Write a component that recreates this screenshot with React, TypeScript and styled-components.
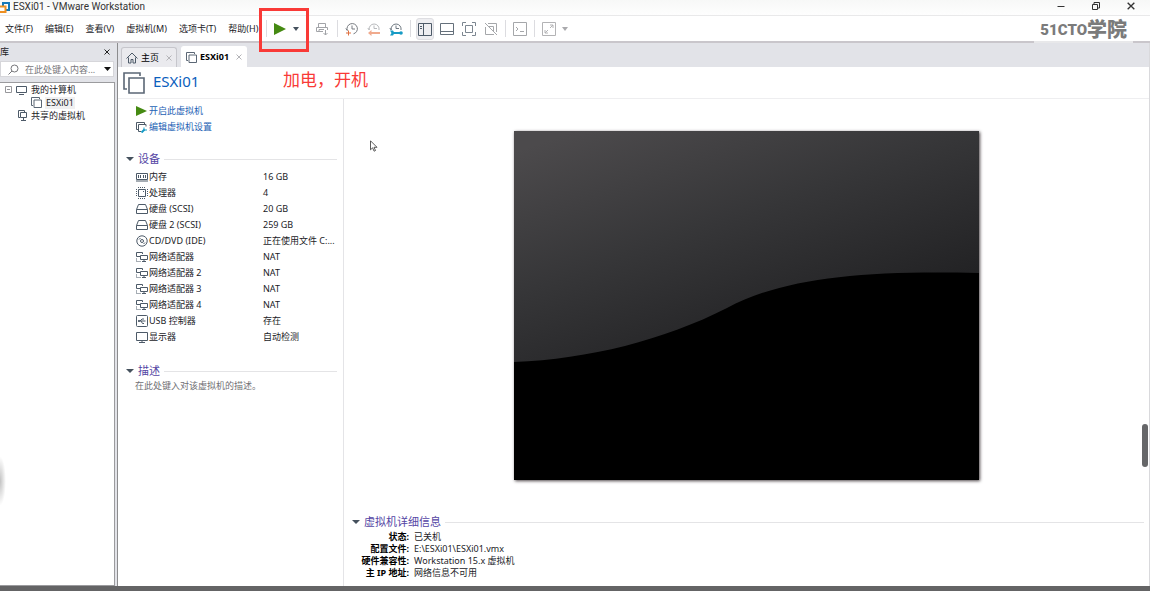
import React from "react";
import styled, { createGlobalStyle } from "styled-components";

const GlobalStyle = createGlobalStyle`
  * { box-sizing: border-box; }
  body {
    margin: 0;
    background: #fff;
    color: #1b1b1f;
    font: 9px/12px "Noto Sans", "Noto Sans CJK SC", sans-serif;
  }
  button, input { font: inherit; color: inherit; }
  h1, h2, p, ul, dl, dd { margin: 0; padding: 0; }
  ul { list-style: none; }
  svg { display: block; flex: none; }
`;

const Window = styled.div`
  position: relative;
  display: flex;
  flex-direction: column;
  min-height: 100vh;
  overflow: hidden;
`;

const TitleBar = styled.header`
  display: flex;
  align-items: center;
  height: 16px;
  padding-right: 2px;
  background: linear-gradient(#f7f8f7, #fefefe);
  border-bottom: 1px solid #e9e9ea;
`;

const WindowTitle = styled.span`
  flex: 1;
  margin-left: 3px;
  padding-bottom: 2px;
  font-family: Roboto, "Noto Sans", sans-serif;
  font-size: 10px;
  color: #333;
`;

const WindowButton = styled.button`
  display: flex;
  align-items: center;
  justify-content: center;
  width: 35px;
  height: 14px;
  padding: 0 0 3px;
  border: 0;
  background: none;
`;

const MenuBar = styled.div`
  display: flex;
  align-items: center;
  height: 27px;
  background: #fff;
  border-bottom: 2px solid #c9c6cb;
`;

const Menus = styled.nav`
  display: flex;
  gap: 12px;
  padding-left: 5px;
`;

const MenuButton = styled.button`
  padding: 0;
  border: 0;
  background: none;
  white-space: nowrap;
`;

const Toolbar = styled.div`
  display: flex;
  align-items: center;
  gap: 4px;
  margin-left: 7px;
`;

const Separator = styled.span`
  width: 1px;
  height: 17px;
  margin: 0 1px;
  background: #dcdce0;
`;

const ToolButton = styled.button<{ $active?: boolean; $width?: number; $lead?: number }>`
  display: flex;
  align-items: center;
  justify-content: center;
  width: ${(p) => p.$width ?? 18}px;
  height: 22px;
  margin-left: ${(p) => p.$lead ?? 0}px;
  padding: 0;
  border: 1px solid ${(p) => (p.$active ? "#dedee2" : "transparent")};
  border-radius: 3px;
  background: ${(p) => (p.$active ? "#eeeef1" : "none")};
`;

const Brand = styled.div`
  display: flex;
  align-items: center;
  align-self: stretch;
  margin: 0 17px -2px auto;
  padding: 2px 6px 0;
  border-bottom: 2px solid #e8e8ea;
  background: #fff;
  color: #7b7b7b;
  font: 900 20px/22px Roboto, "Noto Sans CJK SC", sans-serif;
  white-space: nowrap;
`;

const BrandLatin = styled.span`
  font-size: 15px;
`;

const Workspace = styled.div`
  display: flex;
  flex: 1;
`;

const Sidebar = styled.aside`
  display: flex;
  flex-direction: column;
  flex: none;
  width: 118px;
  border-right: 1px solid #8c8c8e;
  background: #e2e3e8;
`;

const SidebarHeader = styled.div`
  display: flex;
  align-items: center;
  justify-content: space-between;
  height: 18px;
  padding-right: 7px;
`;

const PlainButton = styled.button`
  display: flex;
  padding: 0;
  border: 0;
  background: none;
`;

const SearchBox = styled.label`
  display: flex;
  align-items: center;
  height: 16px;
  margin-right: 3px;
  padding: 0 2px 0 7px;
  border: 1px solid #d6d6da;
  background: #fff;
`;

const SearchInput = styled.input`
  flex: 1;
  min-width: 0;
  height: 14px;
  margin: 0 4px 0 6px;
  padding: 0;
  border: 0;
  outline: 0;
  background: none;
  &::placeholder { color: #77777b; opacity: 1; }
`;

const Tree = styled.ul`
  flex: 1;
  margin: 5px 2px 0 0;
  padding: 0 0 0 5px;
  border: 1px solid #9b9b9e;
  border-left: 0;
  background: #fff;
`;

const TreeItem = styled.li<{ $level: number; $selected?: boolean }>`
  display: flex;
  align-items: center;
  gap: 3px;
  height: 13px;
  padding-left: ${(p) => p.$level * 13}px;
  white-space: nowrap;
  span {
    padding: 0 1px;
    background: ${(p) => (p.$selected ? "#f0f0f1" : "none")};
  }
`;

const Content = styled.div`
  display: flex;
  flex: 1;
  flex-direction: column;
  min-width: 0;
  border-right: 1px solid #d9d9dc;
`;

const TabStrip = styled.div`
  display: flex;
  align-items: flex-end;
  gap: 4px;
  height: 24px;
  padding-left: 3px;
  background: #e2e3e8;
`;

const Tab = styled.div<{ $active?: boolean }>`
  display: flex;
  align-items: center;
  gap: 3px;
  height: ${(p) => (p.$active ? 21 : 20)}px;
  padding: 0 4px;
  border: 1px solid ${(p) => (p.$active ? "#fff" : "#c6c6cc")};
  border-bottom: 0;
  border-radius: 3px 3px 0 0;
  background: ${(p) => (p.$active ? "#fff" : "#eaeaee")};
  font-weight: ${(p) => (p.$active ? 700 : 400)};
  color: #000;
`;

const TabLabel = styled.button`
  display: flex;
  align-items: center;
  gap: 3px;
  padding: 0 4px 0 0;
  border: 0;
  background: none;
`;

const PageHeader = styled.div`
  display: flex;
  align-items: center;
  gap: 8px;
  height: 32px;
  padding-left: 5px;
  border-bottom: 1px solid #eeeef0;
`;

const PageTitle = styled.h1`
  padding-bottom: 4px;
  font-size: 15px;
  line-height: 20px;
  font-weight: 400;
  color: #0b60bd;
`;

const Panels = styled.div`
  display: flex;
  flex: 1;
`;

const Summary = styled.section`
  flex: none;
  width: 226px;
  padding: 4px 6px 0 8px;
  border-right: 1px solid #e4e4e7;
`;

const Commands = styled.div`
  display: flex;
  flex-direction: column;
  padding-left: 10px;
`;

const CommandLink = styled.a`
  display: flex;
  align-items: center;
  gap: 2px;
  height: 16px;
  color: #1c62b4;
  text-decoration: none;
`;

const SectionTitle = styled.h2`
  display: flex;
  align-items: center;
  gap: 4px;
  height: 16px;
  font-size: 11px;
  line-height: 16px;
  font-weight: 400;
  color: #5445a4;
  &::after {
    content: "";
    flex: 1;
    height: 1px;
    background: #e4e4e6;
  }
`;

const Devices = styled.div`
  margin-top: 16px;
`;

const DeviceTable = styled.table`
  width: 100%;
  margin-top: 2px;
  border-collapse: collapse;
  table-layout: fixed;
`;

const DeviceName = styled.th`
  width: 137px;
  height: 16px;
  padding: 0 0 0 10px;
  font-weight: 400;
  text-align: left;
  white-space: nowrap;
  div {
    display: flex;
    align-items: center;
    gap: 1px;
  }
`;

const DeviceValue = styled.td`
  padding: 0;
  white-space: nowrap;
`;

const Description = styled.div`
  margin-top: 18px;
  p {
    padding: 1px 0 0 9px;
    color: #707074;
  }
`;

const Main = styled.main`
  display: flex;
  flex: 1;
  flex-direction: column;
  min-width: 0;
`;

const ScreenArea = styled.div`
  display: flex;
  flex: 1;
  align-items: center;
  justify-content: center;
  padding-bottom: 2px;
`;

const Preview = styled.svg`
  width: 58%;
  max-width: 465px;
  height: auto;
  box-shadow: 1px 1px 3px rgba(30, 20, 25, 0.8);
`;

const Details = styled.section`
  padding: 0 5px 7px 8px;
`;

const DetailList = styled.dl`
  display: grid;
  grid-template-columns: 57px 1fr;
  column-gap: 5px;
  margin-top: 1px;
  line-height: 12px;
  dt {
    font-weight: 700;
    text-align: right;
    white-space: nowrap;
    color: #000;
  }
`;

const BottomBar = styled.footer`
  height: 5px;
  background: #646465;
`;

const Highlight = styled.div`
  position: absolute;
  top: 8px;
  left: 259px;
  width: 50px;
  height: 44px;
  border: 3px solid #f93a37;
  pointer-events: none;
`;

const Note = styled.p`
  position: absolute;
  top: 68px;
  left: 283px;
  font-size: 17px;
  line-height: 24px;
  color: #f93a37;
`;

const Pointer = styled.svg`
  position: absolute;
  top: 140px;
  left: 370px;
`;

const ScrollHandle = styled.div`
  position: absolute;
  top: 424px;
  right: 2px;
  width: 6px;
  height: 43px;
  border-radius: 3px;
  background: #666769;
`;

const EdgeShade = styled.div`
  position: absolute;
  top: 456px;
  left: 0;
  width: 6px;
  height: 50px;
  background: radial-gradient(ellipse at left, rgba(0, 0, 0, 0.24), transparent 70%);
`;

type IconProps = { w?: number; h?: number; color?: string; children: React.ReactNode };

const Icon = ({ w = 12, h = 12, color = "#4d5a68", children }: IconProps) => (
  <svg width={w} height={h} viewBox={`0 0 ${w} ${h}`} fill="none" stroke={color} aria-hidden="true">
    {children}
  </svg>
);

const Caret = ({ color = "#45515d", size = 6 }: { color?: string; size?: number }) => (
  <svg width={size} height="4" viewBox="0 0 6 4" preserveAspectRatio="none" aria-hidden="true">
    <path d="M0 0h6L3 4z" fill={color} />
  </svg>
);

const Cross = ({ color = "#b4b4b8", size = 6 }: { color?: string; size?: number }) => (
  <svg width={size} height={size} viewBox="0 0 6 6" stroke={color} aria-hidden="true">
    <path d="M.5 .5l5 5M5.500 .5l-5 5" />
  </svg>
);

const VmIcon = ({ size = 11 }: { size?: number }) => (
  <svg
    width={size}
    height={size}
    viewBox="0 0 11 11"
    fill="none"
    stroke="#5b6775"
    strokeWidth={size > 11 ? 0.8 : 1}
    aria-hidden="true"
  >
    <path d="M2 8.500H.5v-8h8V2" />
    <path d="M3 3h7.500v7.500H3z" />
  </svg>
);

const PlayIcon = ({ w = 10, h = 10 }: { w?: number; h?: number }) => (
  <svg width={w} height={h} viewBox="0 0 10 10" preserveAspectRatio="none" aria-hidden="true">
    <path d="M0 0l10 5-10 5z" fill="#458a12" />
  </svg>
);

const Clock = ({ color }: { color: string }) => (
  <g stroke={color}>
    <path d="M2.300 8.500A5.200 5.200 0 1 1 8.500 11.800" />
    <path d="M.8 6.500l1.500 2M7 3.500v3.500h3" />
  </g>
);

const HalfClock = ({ color }: { color: string }) => (
  <g stroke={color}>
    <path d="M2.200 8A5 5 0 1 1 12 8" />
    <path d="M.8 6l1.400 2M7 3.500v3h3" />
  </g>
);

const Memory = () => (
  <Icon>
    <path d="M.5 2.500h11v6H.5zM0 10h12" />
    <path d="M2.500 4v3M4.500 4v3M7.500 4v3M9.500 4v3" />
  </Icon>
);
const Cpu = () => (
  <Icon>
    <path d="M2.500 2.500h7v7h-7z" />
    <path d="M2 .5h8M2 11.500h8M.5 2v8M11.500 2v8" strokeDasharray="1 1" />
    <path d="M7 4.500h1" />
  </Icon>
);
const Disk = () => (
  <Icon><path d="M.5 6.500l2-5h7l2 5v4H.5zM.5 6.500h11" /></Icon>
);
const Disc = () => (
  <Icon>
    <circle cx="6" cy="6" r="5.200" />
    <circle cx="6" cy="6" r="1.500" />
    <path d="M3 4.500L4.500 3M7.500 9L9 7.500" />
  </Icon>
);
const Network = () => (
  <Icon>
    <path d="M4 5.500H.5v-4h6V3" />
    <path d="M4.500 4.500h7v4h-7zM6 10.500h4M8 8.500v2" />
    <path d="M.5 7.500v3h4" strokeDasharray="1 1" />
  </Icon>
);
const Usb = () => (
  <Icon>
    <rect x=".5" y=".5" width="11" height="11" rx="1" />
    <path d="M2 6h7.500M4 6l2-2h2M5 6l1.500 2.500H8" />
    <circle cx="3" cy="6" r=".7" />
  </Icon>
);
const Display = () => (
  <Icon><path d="M.5 1.500h11v8H.5zM3 11.500h6M6 9.500v2" /></Icon>
);

const devices: [React.ComponentType, string, string][] = [
  [Memory, "内存", "16 GB"],
  [Cpu, "处理器", "4"],
  [Disk, "硬盘 (SCSI)", "20 GB"],
  [Disk, "硬盘 2 (SCSI)", "259 GB"],
  [Disc, "CD/DVD (IDE)", "正在使用文件 C:..."],
  [Network, "网络适配器", "NAT"],
  [Network, "网络适配器 2", "NAT"],
  [Network, "网络适配器 3", "NAT"],
  [Network, "网络适配器 4", "NAT"],
  [Usb, "USB 控制器", "存在"],
  [Display, "显示器", "自动检测"],
];

const details = [
  ["状态:", "已关机"],
  ["配置文件:", "E:\\ESXi01\\ESXi01.vmx"],
  ["硬件兼容性:", "Workstation 15.x 虚拟机"],
  ["主 IP 地址:", "网络信息不可用"],
];

const menus = ["文件(F)", "编辑(E)", "查看(V)", "虚拟机(M)", "选项卡(T)", "帮助(H)"];

export default function App() {
  return (
    <>
      <GlobalStyle />
      <Window>
        <TitleBar>
          <svg width="10" height="12" viewBox="0 0 10 12" fill="none" strokeWidth="2" aria-hidden="true">
            <path d="M3 5V1h6v7H6" stroke="#1679b8" />
            <path d="M0 4.500h5.500V10H0" stroke="#ee9021" />
          </svg>
          <WindowTitle>ESXi01 - VMware Workstation</WindowTitle>
          <WindowButton aria-label="最小化">
            <Icon w={8} h={8} color="#333"><path d="M.5 4.500h7" /></Icon>
          </WindowButton>
          <WindowButton aria-label="还原">
            <Icon w={8} h={8} color="#333"><path d="M.5 2.500h5v5h-5zM2 2V.5h5.500V6H6" /></Icon>
          </WindowButton>
          <WindowButton aria-label="关闭"><Cross color="#333" size={8} /></WindowButton>
        </TitleBar>

        <MenuBar>
          <Menus>
            {menus.map((m) => <MenuButton key={m}>{m}</MenuButton>)}
          </Menus>
          <Toolbar>
            <Separator />
            <ToolButton aria-label="开机" $width={16}><PlayIcon w={12} h={12} /></ToolButton>
            <ToolButton aria-label="电源选项" $width={8}><Caret /></ToolButton>
            <ToolButton aria-label="发送 Ctrl+Alt+Del" $width={20} $lead={8}>
              <Icon w={14} h={14} color="#a2a4a8">
                <path d="M3.500 1.500h7v4h-7zM8 9.500H1.500v-4h11V8M4 9.500v-2h5M10.500 8v5M8.500 11l2 2 2-2" />
              </Icon>
            </ToolButton>
            <Separator />
            <ToolButton aria-label="拍摄快照">
              <Icon w={14} h={14}><Clock color="#777b80" /><path d="M3.500 8.500v5M1 11h5" stroke="#df7140" /></Icon>
            </ToolButton>
            <ToolButton aria-label="恢复快照">
              <Icon w={14} h={14}>
                <HalfClock color="#b8babd" />
                <path d="M3 11h10" stroke="#f0aa8d" strokeWidth="2" />
                <path d="M4.500 8v6L1 11z" fill="#f0aa8d" stroke="none" />
              </Icon>
            </ToolButton>
            <ToolButton aria-label="管理快照">
              <Icon w={14} h={14}>
                <HalfClock color="#6f7982" />
                <path d="M4 11h8" stroke="#179bc5" strokeWidth="2" />
                <path d="M1 8.500h3l1.500 2.500L4 13.500H1L2.500 11z" fill="#179bc5" stroke="none" />
                <circle cx="12" cy="11" r="1.800" fill="#179bc5" stroke="none" />
              </Icon>
            </ToolButton>
            <Separator />
            <ToolButton aria-label="显示库" $active>
              <Icon w={14} h={14}><path d="M.5 1.500h13v12H.5zM5.500 2v11M2 4.500h2M2 6.500h2" /></Icon>
            </ToolButton>
            <ToolButton aria-label="显示缩略图">
              <Icon w={14} h={14} color="#65707b"><path d="M.5 1.500h13v11H.5zM1 9.500h12" /></Icon>
            </ToolButton>
            <ToolButton aria-label="全屏">
              <Icon w={14} h={14} color="#7c8690"><path d="M4 .5H.5V4M10 .5h3.500V4M4 13.500H.5V10M10 13.500h3.500V10M3.500 3.500h7v7h-7z" /></Icon>
            </ToolButton>
            <ToolButton aria-label="Unity">
              <Icon w={14} h={14} color="#a5a7aa"><path d="M4 1.500h8.500V10M10 12.500H1.500V5M5 4.500h4.500V9M1 1l12 12" /></Icon>
            </ToolButton>
            <Separator />
            <ToolButton aria-label="控制台">
              <Icon w={14} h={14} color="#a5a7aa"><path d="M.5 .5h13v13H.5zM3 5l2 2-2 2M7 9.500h4" /></Icon>
            </ToolButton>
            <Separator />
            <ToolButton aria-label="拉伸">
              <Icon w={14} h={14} color="#b3b3b5"><path d="M.5 .5h13v13H.5zM8 3h3v3M6 11H3V8M11 3L8 6M3 11l3-3" /></Icon>
            </ToolButton>
            <ToolButton aria-label="拉伸选项" $width={6}><Caret color="#aaaaad" /></ToolButton>
          </Toolbar>
          <Brand><BrandLatin>51CTO</BrandLatin>学院</Brand>
        </MenuBar>

        <Workspace>
          <Sidebar>
            <SidebarHeader>
              <span>库</span>
              <PlainButton aria-label="关闭库"><Cross color="#222" size={6} /></PlainButton>
            </SidebarHeader>
            <SearchBox>
              <Icon w={11} h={11} color="#77777b"><circle cx="6.500" cy="4.500" r="3.500" /><path d="M4 7L.5 10.500" /></Icon>
              <SearchInput aria-label="搜索" placeholder="在此处键入内容..." />
              <Caret color="#111" size={7} />
            </SearchBox>
            <Tree>
              <TreeItem $level={0}>
                <Icon w={8} h={8} color="#97979b"><path d="M.5 .5h6v6h-6zM2 3.500h3" /></Icon>
                <Icon w={11} h={10}><path d="M.5 1.500h10v6H.5zM3 9.500h5" /></Icon>
                <span>我的计算机</span>
              </TreeItem>
              <TreeItem $level={2} $selected>
                <VmIcon />
                <span>ESXi01</span>
              </TreeItem>
              <TreeItem $level={1}>
                <Icon w={9} h={11}><path d="M2 7.500H.5v-7h6V2M2.500 2.500h6v5h-6zM5.500 8v2.500M3 10.500h5" /></Icon>
                <span>共享的虚拟机</span>
              </TreeItem>
            </Tree>
          </Sidebar>

          <Content>
            <TabStrip>
              <Tab>
                <TabLabel>
                  <Icon><path d="M.5 6.500L6 1l5.500 5.500M2.500 5.500v5.500h2.500V7.500h2V11h2.500V5.500" /></Icon>
                  主页
                </TabLabel>
                <PlainButton aria-label="关闭标签"><Cross /></PlainButton>
              </Tab>
              <Tab $active>
                <TabLabel><VmIcon />ESXi01</TabLabel>
                <PlainButton aria-label="关闭标签"><Cross /></PlainButton>
              </Tab>
            </TabStrip>
            <PageHeader>
              <VmIcon size={22} />
              <PageTitle>ESXi01</PageTitle>
            </PageHeader>

            <Panels>
              <Summary>
                <Commands>
                  <CommandLink href="#start"><PlayIcon w={11} />开启此虚拟机</CommandLink>
                  <CommandLink href="#settings">
                    <Icon w={11} h={11}>
                      <path d="M2 7.500H.5v-7h8V2M10 4.500v-2H2.500v7H5" />
                      <path d="M5.500 10.500l3-3" stroke="#169ac5" strokeWidth="2" />
                      <path d="M8 5.500v2.500h3" stroke="#169ac5" />
                    </Icon>
                    编辑虚拟机设置
                  </CommandLink>
                </Commands>
                <Devices>
                  <SectionTitle><Caret size={8} />设备</SectionTitle>
                  <DeviceTable>
                    <tbody>
                      {devices.map(([Glyph, name, value]) => (
                        <tr key={name}>
                          <DeviceName scope="row"><div><Glyph />{name}</div></DeviceName>
                          <DeviceValue>{value}</DeviceValue>
                        </tr>
                      ))}
                    </tbody>
                  </DeviceTable>
                </Devices>
                <Description>
                  <SectionTitle><Caret size={8} />描述</SectionTitle>
                  <p>在此处键入对该虚拟机的描述。</p>
                </Description>
              </Summary>

              <Main>
                <ScreenArea>
                  <Preview viewBox="0 0 465 349" role="img" aria-label="虚拟机屏幕">
                    <defs>
                      <linearGradient id="sheen" gradientUnits="userSpaceOnUse" x1="60" y1="0" x2="150" y2="255">
                        <stop offset="0" stopColor="#4c4a4c" />
                        <stop offset="0.5" stopColor="#363638" />
                        <stop offset="1" stopColor="#222224" />
                      </linearGradient>
                    </defs>
                    <path d="M0 0h465v349H0z" fill="#000" />
                    <path
                      d="M0 0H465V142C350 139 268 147 213 177C150 209 75 228 0 231Z"
                      fill="url(#sheen)"
                    />
                  </Preview>
                </ScreenArea>
                <Details>
                  <SectionTitle><Caret size={8} />虚拟机详细信息</SectionTitle>
                  <DetailList>
                    {details.map(([term, value]) => (
                      <React.Fragment key={term}>
                        <dt>{term}</dt>
                        <dd>{value}</dd>
                      </React.Fragment>
                    ))}
                  </DetailList>
                </Details>
              </Main>
            </Panels>
          </Content>
        </Workspace>
        <BottomBar />

        <Highlight />
        <Note>加电，开机</Note>
        <Pointer width="8" height="12" viewBox="0 0 8 12" aria-hidden="true">
          <path d="M.5 .8v9l2.100-2 1.500 3.400 1.400-.7L4 7.300h3z" fill="#fff" stroke="#333" strokeWidth=".8" />
        </Pointer>
        <ScrollHandle />
        <EdgeShade />
      </Window>
    </>
  );
}
